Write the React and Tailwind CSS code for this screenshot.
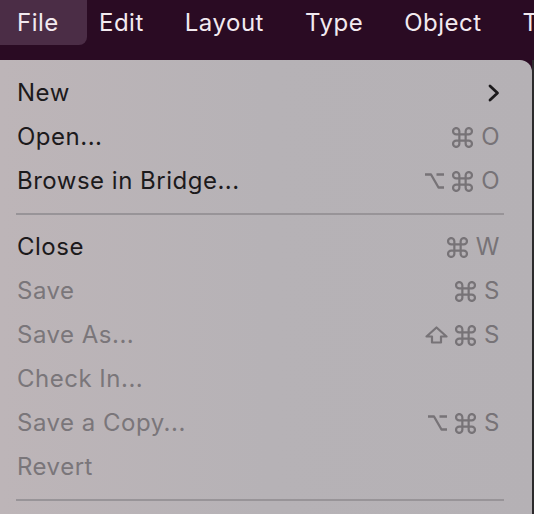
import React from 'react'

const items = [
    { label: 'New', submenu: true },
    { label: 'Open...', keys: ['cmd'], key: 'O' },
    { label: 'Browse in Bridge...', keys: ['opt', 'cmd'], key: 'O' },
    { sep: true },
    { label: 'Close', keys: ['cmd'], key: 'W' },
    { label: 'Save', keys: ['cmd'], key: 'S', disabled: true },
    { label: 'Save As...', keys: ['shift', 'cmd'], key: 'S', disabled: true },
    { label: 'Check In...', disabled: true },
    { label: 'Save a Copy...', keys: ['opt', 'cmd'], key: 'S', disabled: true },
    { label: 'Revert', disabled: true },
    { sep: true },
]

function Chevron() {
    return (
        <svg width="13" height="18" viewBox="0 0 13 18" fill="none">
            <path d="M3 2 L10.5 9 L3 16" stroke="#1c1a1c" strokeWidth="2.8" strokeLinecap="round" strokeLinejoin="round" />
        </svg>
    )
}

function ModKey({ name }) {
    if (name === 'cmd') {
        return (
            <svg width="21" height="21" viewBox="2 2 20 20" fill="none">
                <path d="M15 6v12a3 3 0 1 0 3-3H6a3 3 0 1 0 3 3V6a3 3 0 1 0-3 3h12a3 3 0 1 0-3-3" stroke="#777377" strokeWidth="2.1" strokeLinecap="round" strokeLinejoin="round" />
            </svg>
        )
    }
    if (name === 'opt') {
        return (
            <svg width="21" height="18" viewBox="0 0 21 18" fill="none">
                <path d="M1 2.5 H7 L14.5 15.5 H20 M12.5 2.5 H20" stroke="#777377" strokeWidth="2.3" strokeLinejoin="round" />
            </svg>
        )
    }
    return (
        <svg width="23" height="18" viewBox="0 0 23 18" fill="none">
            <path d="M11.5 1.5 L21.5 10.5 H16 V16.5 H7 V10.5 H1.5 Z" stroke="#777377" strokeWidth="2.2" strokeLinejoin="round" />
        </svg>
    )
}

function Row({ item }) {
    if (item.sep) {
        return (
            <div className="h-[22px] flex items-center -mr-[4px] -ml-[1px]">
                <div className="h-[2px] w-full bg-[#989498]"></div>
            </div>
        )
    }
    return (
        <div className="h-[44px] flex items-center justify-between">
            <span className={item.disabled ? 'text-[#7a767a]' : 'text-[#1c1a1c]'}>{item.label}</span>
            {item.submenu && <Chevron />}
            {item.key && (
                <span className="flex items-center gap-[7px] text-[#777377]">
                    {item.keys.map((k, i) => (
                        <ModKey key={i} name={k} />
                    ))}
                    <span className="ml-[1px]">{item.key}</span>
                </span>
            )}
        </div>
    )
}

function App() {
    const menus = ['Edit', 'Layout', 'Type', 'Object', 'T']

    return (
        <div className="w-[534px] h-[514px] overflow-hidden bg-[#2a0b23] font-['Inter',sans-serif] text-[24px] tracking-[0.5px]">
            <div className="h-[60px] flex items-start text-[#f2eaf0] overflow-hidden">
                <div className="shrink-0 w-[87px] h-[45px] pl-[17px] flex items-center rounded-br-[8px] bg-[#4b2d46]">File</div>
                <div className="shrink-0 h-[45px] ml-[12px] flex items-center gap-[41px] whitespace-nowrap">
                    {menus.map(m => (
                        <span key={m}>{m}</span>
                    ))}
                </div>
            </div>
            <div className="flex h-[454px]">
                <div className="shrink-0 w-[532px] rounded-tr-[12px] bg-gradient-to-r from-[#bdb5b8] via-[#b6b2b6] to-[#b5b1b5] pt-[11px] pl-[17px] pr-[32px]">
                    {items.map((item, i) => (
                        <Row key={i} item={item} />
                    ))}
                </div>
                <div className="flex-1 bg-[#2c2a2c]"></div>
            </div>
        </div>
    )
}

export default App
